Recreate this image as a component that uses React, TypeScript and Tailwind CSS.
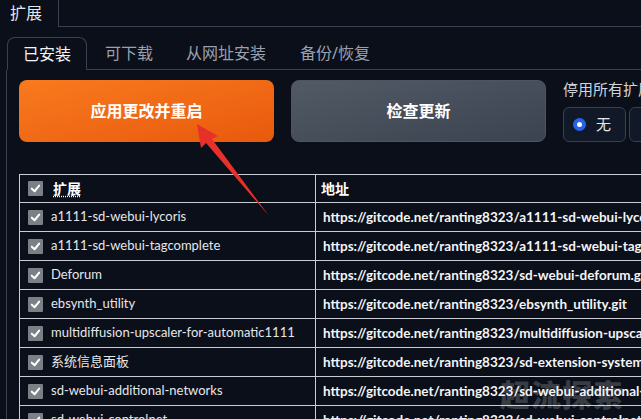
import React from 'react';

const font = { fontFamily: '"Noto Sans", "Noto Sans CJK SC", sans-serif' };
const tableFont = { fontFamily: 'Lato, "Noto Sans CJK SC", sans-serif' };

const rows: [string, string][] = [
  ['a1111-sd-webui-lycoris', 'https://gitcode.net/ranting8323/a1111-sd-webui-lycoris.git'],
  ['a1111-sd-webui-tagcomplete', 'https://gitcode.net/ranting8323/a1111-sd-webui-tagcomplete.git'],
  ['Deforum', 'https://gitcode.net/ranting8323/sd-webui-deforum.git'],
  ['ebsynth_utility', 'https://gitcode.net/ranting8323/ebsynth_utility.git'],
  ['multidiffusion-upscaler-for-automatic1111', 'https://gitcode.net/ranting8323/multidiffusion-upscaler-for-automatic1111.git'],
  ['系统信息面板', 'https://gitcode.net/ranting8323/sd-extension-system-info.git'],
  ['sd-webui-additional-networks', 'https://gitcode.net/ranting8323/sd-webui-additional-networks.git'],
  ['sd-webui-controlnet', 'https://gitcode.net/ranting8323/sd-webui-controlnet.git'],
];

function Check() {
  return (
    <span className="w-[15px] h-[15px] shrink-0 bg-[#7b7f86] rounded-[1px] flex items-center justify-center">
      <svg width="11" height="11" viewBox="0 0 12 12">
        <path d="M2 6.2 L5 9 L10 2.8" fill="none" stroke="white" strokeWidth="2.2" strokeLinecap="round" strokeLinejoin="round" />
      </svg>
    </span>
  );
}

export default function App() {
  return (
    <div className="w-[641px] h-[419px] bg-[#0b0f19] overflow-hidden relative" style={font}>
      {/* top tabs */}
      <div className="flex h-[27px]">
        <div className="w-[59px] border-r border-[#374151] text-[16px] text-gray-200 pl-[10px] leading-[26px]">扩展</div>
        <div className="flex-1 border-b border-[#374151]" />
      </div>

      {/* inner tabs */}
      <div className="flex mt-[10px] ml-[7px] h-[33px] text-[16px]">
        <div className="w-[80px] border border-b-0 border-[#374151] rounded-t-lg text-gray-100 flex items-center justify-center">已安装</div>
        <div className="flex-1 flex items-center border-b border-[#374151] text-gray-400 whitespace-nowrap">
          <span className="ml-[18px]">可下载</span>
          <span className="ml-[33px]">从网址安装</span>
          <span className="ml-[34px]">备份/恢复</span>
        </div>
      </div>

      <div className="ml-[6px] border-l border-[#374151] pl-[12px] h-full">
        {/* buttons */}
        <div className="flex gap-[17px] pt-[10px]">
          <div className="w-[255px] h-[62px] shrink-0 rounded-lg bg-gradient-to-br from-[#f97a1e] to-[#e8590c] flex items-center justify-center text-white font-bold text-[16px]">
            应用更改并重启
          </div>
          <div className="w-[255px] h-[62px] shrink-0 rounded-lg border border-[#4b5563] bg-gradient-to-br from-[#525a66] to-[#3b4350] flex items-center justify-center text-white font-bold text-[16px]">
            检查更新
          </div>
          <div className="shrink-0">
            <div className="text-[15px] text-gray-300 whitespace-nowrap mt-[-1px] leading-[20px]">停用所有扩展</div>
            <div className="flex gap-[3px] mt-[8px]">
              <div className="w-[63px] h-[35px] border border-[#374151] rounded-md bg-[#111827] flex items-center pl-[9px] gap-[10px]">
                <span className="w-[13px] h-[13px] rounded-full bg-[#2563eb] flex items-center justify-center">
                  <span className="w-[5px] h-[5px] rounded-full bg-white" />
                </span>
                <span className="text-[15px] text-gray-200">无</span>
              </div>
              <div className="w-[63px] h-[35px] border border-[#374151] rounded-md bg-[#111827]" />
            </div>
          </div>
        </div>

        {/* table */}
        <div className="mt-[32px] w-[700px] border-t border-l border-[#c9ccd2]" style={tableFont}>
          <div className="flex h-[28px] border-b border-[#c9ccd2] text-[14px]">
            <div className="w-[296px] shrink-0 border-r border-[#c9ccd2] flex items-center pl-[8px] gap-[10px]">
              <Check />
              <span className="font-bold text-white underline decoration-dotted underline-offset-2">扩展</span>
            </div>
            <div className="flex-1 flex items-center pl-[5px] font-bold text-white">地址</div>
          </div>
          {rows.map(([name, url]) => (
            <div key={name} className="flex h-[29px] border-b border-[#c9ccd2]">
              <div className="w-[296px] shrink-0 border-r border-[#c9ccd2] flex items-center pl-[8px] gap-[8px] text-[13px] text-gray-200 whitespace-nowrap overflow-hidden">
                <Check />
                <span>{name}</span>
              </div>
              <div className="flex-1 flex items-center pl-[7px] text-[13.5px] font-bold text-gray-100 whitespace-nowrap overflow-hidden">{url}</div>
            </div>
          ))}
        </div>
      </div>

      {/* annotation arrow */}
      <svg className="absolute left-0 top-0 pointer-events-none" width="641" height="419">
        <polygon points="197,124 218,136 212,139 269,216 206,143 201,148" fill="#e8302a" />
      </svg>

      {/* watermark */}
      <div className="absolute left-[500px] top-[372px] text-[30px] font-black text-white/20 tracking-[1px] pointer-events-none whitespace-nowrap">
        超流探索
      </div>
    </div>
  );
}
